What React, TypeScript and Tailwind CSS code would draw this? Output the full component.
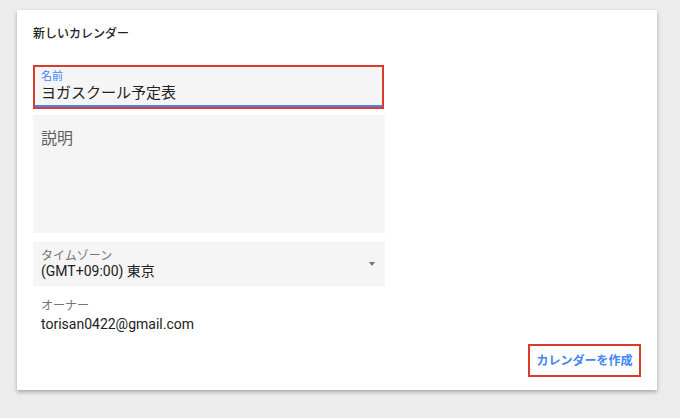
import React from 'react';

const font = { fontFamily: 'Roboto, "Noto Sans CJK JP", sans-serif' };

export default function App() {
  return (
    <div className="w-[680px] h-[418px] bg-[#ececec] pt-[10px] pl-[17px]" style={font}>
      <div className="w-[640px] h-[380px] bg-white shadow-[0_2px_4px_rgba(0,0,0,0.3)] px-4 pt-[17px] flex flex-col">
        {/* Title */}
        <h1 className="text-[12px] leading-[14px] text-[#212121] font-medium">新しいカレンダー</h1>

        {/* Name field (highlighted) */}
        <div className="mt-[24px] w-[351px] h-[44px] border-2 border-[#db3b2b]">
          <div className="h-full bg-[#f5f5f5] border-b-2 border-[#4285f4] pl-[6px] pt-[3px]">
            <div className="text-[11px] leading-[13px] text-[#4285f4]">名前</div>
            <div className="text-[15px] leading-[20px] text-[#212121]">ヨガスクール予定表</div>
          </div>
        </div>

        {/* Description */}
        <div className="mt-[6px] w-[352px] h-[118px] bg-[#f5f5f5] pl-2 pt-[14px]">
          <div className="text-[16px] leading-[20px] text-[#5f5f5f]">説明</div>
        </div>

        {/* Time zone */}
        <div className="mt-[9px] w-[352px] h-[44px] bg-[#f5f5f5] pl-2 pr-[10px] flex items-center">
          <div className="flex-1 pt-[1px]">
            <div className="text-[12px] leading-[14px] text-[#757575]">タイムゾーン</div>
            <div className="text-[14px] leading-[17px] text-[#212121]">(GMT+09:00) 東京</div>
          </div>
          <div className="w-0 h-0 border-l-[3.5px] border-r-[3.5px] border-t-[4px] border-l-transparent border-r-transparent border-t-[#757575]" />
        </div>

        {/* Owner */}
        <div className="mt-[13px] pl-2">
          <div className="text-[12px] leading-[14px] text-[#757575]">オーナー</div>
          <div className="mt-[3px] text-[14px] leading-[17px] text-[#212121]">torisan0422@gmail.com</div>
        </div>

        {/* Create button (highlighted) */}
        <div className="mt-auto mb-[13px] flex justify-end">
          <div className="w-[113px] h-[33px] border-2 border-[#db3b2b] flex items-center justify-center">
            <span className="text-[12px] font-bold text-[#4285f4]">カレンダーを作成</span>
          </div>
        </div>
      </div>
    </div>
  );
}
